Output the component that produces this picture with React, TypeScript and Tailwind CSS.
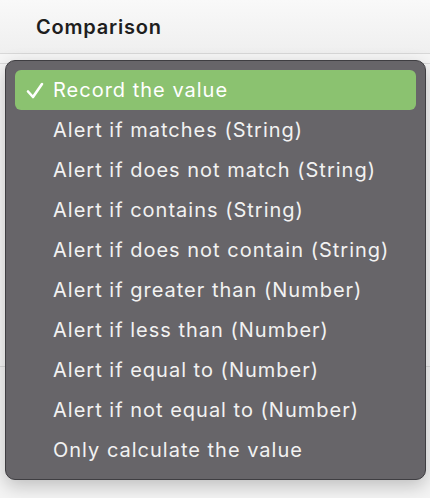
import { useState } from 'react'

const options = [
  'Record the value',
  'Alert if matches (String)',
  'Alert if does not match (String)',
  'Alert if contains (String)',
  'Alert if does not contain (String)',
  'Alert if greater than (Number)',
  'Alert if less than (Number)',
  'Alert if equal to (Number)',
  'Alert if not equal to (Number)',
  'Only calculate the value',
]

export default function App() {
  const [selected, setSelected] = useState(0)

  return (
    <div
      className="relative w-[430px] h-[498px] overflow-hidden bg-[#f4f4f4]"
      style={{ fontFamily: 'Inter, "Liberation Sans", Arial, sans-serif' }}
    >
      {/* table header */}
      <div className="h-[54px] flex items-center px-[36px] bg-gradient-to-b from-[#f9f9f9] to-[#efefef] border-b border-[#d8d8d8]">
        <span className="text-[20px] font-semibold tracking-[0.8px] text-[#1e1e1e]">Comparison</span>
      </div>
      <div className="h-[10px] border-b border-[#dcdcdc] bg-[#f6f6f6]" />
      <div className="h-[303px] border-b border-[#dcdcdc] bg-[#f6f6f6]" />

      {/* popup menu */}
      <div className="absolute left-[5px] top-[60px] w-[421px] rounded-[10px] border border-[#3f3e42] bg-[#676569] p-[9px] shadow-[0_6px_18px_rgba(0,0,0,0.22)]">
        {options.map((label, i) => (
          <div
            key={label}
            onClick={() => setSelected(i)}
            className={
              'h-[40px] flex items-center rounded-[6px] text-[20px] tracking-[1px] text-[#f2f2f2] ' +
              (i === selected ? 'bg-[#8bc270] text-white' : '')
            }
          >
            <span className="w-[38px] flex justify-center pl-[2px]">
              {i === selected && (
                <svg width="18" height="17" viewBox="0 0 18 17" fill="none">
                  <path d="M2 9.5 L7 15 L16 2" stroke="white" strokeWidth="2.6" strokeLinecap="round" strokeLinejoin="round" />
                </svg>
              )}
            </span>
            <span>{label}</span>
          </div>
        ))}
      </div>
    </div>
  )
}
